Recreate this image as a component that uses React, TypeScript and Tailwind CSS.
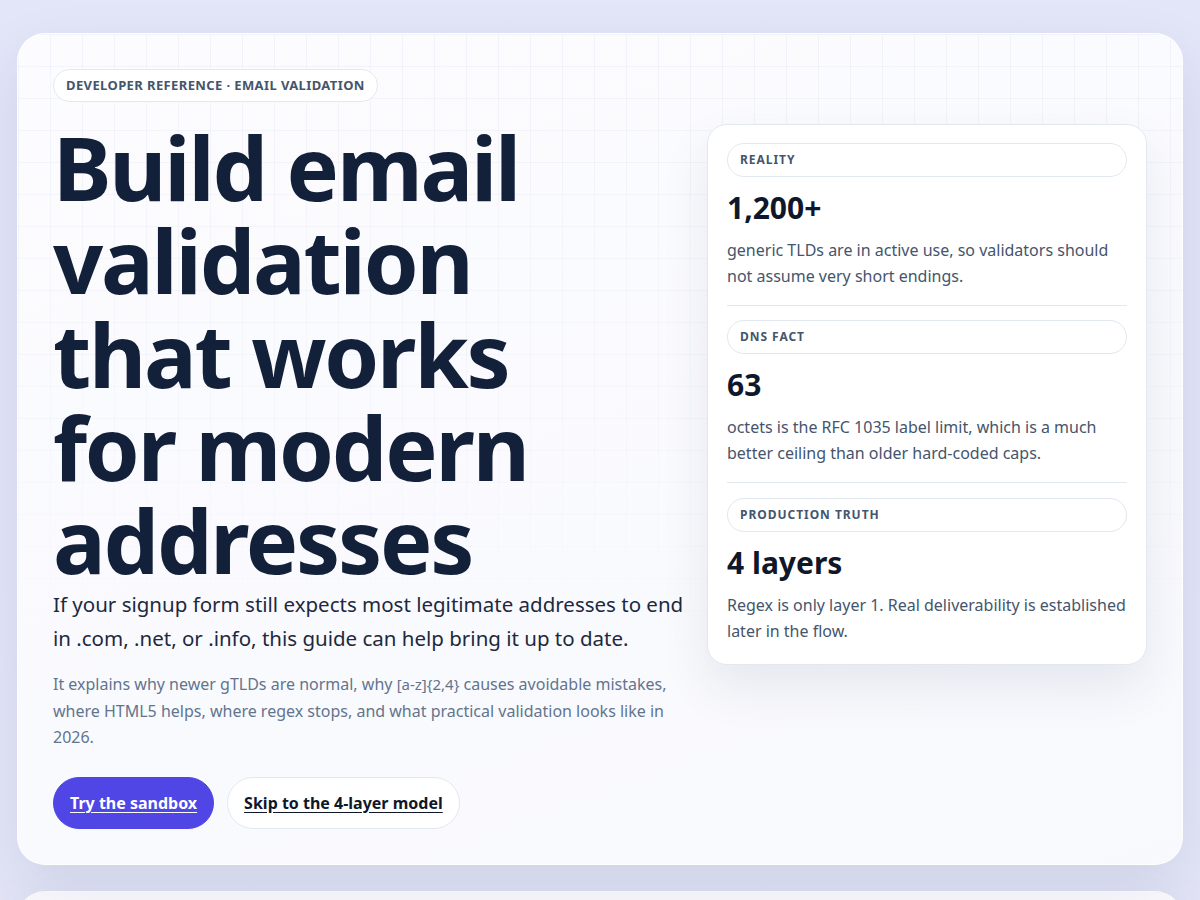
const facts = [
  {
    label: 'Reality',
    value: '1,200+',
    text: 'generic TLDs are in active use, so validators should not assume very short endings.',
  },
  {
    label: 'DNS fact',
    value: '63',
    text: 'octets is the RFC 1035 label limit, which is a much better ceiling than older hard-coded caps.',
  },
  {
    label: 'Production truth',
    value: '4 layers',
    text: 'Regex is only layer 1. Real deliverability is established later in the flow.',
  },
];

function FactCard() {
  return (
    <aside className="mt-[3px] self-start rounded-[20px] border border-slate-200 bg-white px-[19px] pt-[18px] pb-[20px] shadow-[0_22px_50px_rgba(30,41,90,0.09)]">
      {facts.map((f, i) => (
        <div
          key={f.label}
          className={
            i < facts.length - 1
              ? 'border-b border-slate-200 pb-[15px]' + (i > 0 ? ' pt-[14px]' : '')
              : 'pt-[15px]'
          }
        >
          <div className="rounded-full border border-slate-200 px-3 py-2 text-[12px] leading-4 font-bold uppercase tracking-[0.08em] text-slate-600">
            {f.label}
          </div>
          <div className="mt-[13px] text-[30px] leading-[36px] font-bold text-slate-900">{f.value}</div>
          <p className="mt-[11px] text-[16px] leading-[1.65] text-slate-600">{f.text}</p>
        </div>
      ))}
    </aside>
  );
}

export default function App() {
  return (
    <div
      className="min-h-screen bg-[linear-gradient(180deg,#e3e5f8_0%,#e4e6f6_100%)] px-[17px] pt-[33px] pb-10"
      style={{ fontFamily: '"Noto Sans", "Open Sans", sans-serif' }}
    >
      <section className="relative overflow-hidden rounded-[28px] border border-white/80 bg-[linear-gradient(160deg,#fcfcff_0%,#f8f9fd_100%)] px-[35px] py-[35px] shadow-[0_24px_60px_rgba(40,50,110,0.10)]">
        {/* faint grid, fading out toward the bottom */}
        <div className="pointer-events-none absolute inset-0 bg-[linear-gradient(to_right,rgba(99,102,180,0.06)_1px,transparent_1px),linear-gradient(to_bottom,rgba(99,102,180,0.06)_1px,transparent_1px)] bg-[size:32px_32px] [mask-image:linear-gradient(to_bottom,black_0%,rgba(0,0,0,0.6)_45%,transparent_80%)]" />

        <div className="relative">
          <span className="inline-flex rounded-full border border-slate-200 bg-white px-3 py-[7px] text-[13px] leading-[17px] font-bold uppercase tracking-[0.03em] text-slate-600">
            Developer reference · Email validation
          </span>

          <div className="mt-[19px] grid grid-cols-[minmax(0,1fr)_440px] gap-5">
            <div>
              <h1 className="max-w-[560px] text-[88px] leading-[1.06] font-bold tracking-[-0.025em] text-[#13203a]">
                Build email validation that works for modern addresses
              </h1>
              <p className="text-[20.5px] leading-[1.66] text-slate-800">
                If your signup form still expects most legitimate addresses to end in .com, .net, or .info, this
                guide can help bring it up to date.
              </p>
              <p className="mt-4 text-[16px] leading-[1.65] text-slate-500">
                It explains why newer gTLDs are normal, why{' '}
                <code className="text-[15px] leading-none" style={{ fontFamily: '"Noto Sans", sans-serif' }}>
                  [a-z]{'{2,4}'}
                </code>{' '}
                causes avoidable mistakes, where HTML5 helps, where regex stops, and what practical validation looks
                like in 2026.
              </p>
              <div className="mt-[26px] flex gap-[13px]">
                <a
                  href="#sandbox"
                  className="inline-flex h-[52px] items-center rounded-full border border-[#4f46e5] bg-[#4f46e5] px-4 text-[16px] font-bold text-white underline underline-offset-[3px]"
                >
                  Try the sandbox
                </a>
                <a
                  href="#layers"
                  className="inline-flex h-[52px] items-center rounded-full border border-slate-200 bg-white px-4 text-[16px] font-bold text-slate-900 underline underline-offset-[3px]"
                >
                  Skip to the 4-layer model
                </a>
              </div>
            </div>
            <FactCard />
          </div>
        </div>
      </section>

      <section className="mt-[26px] h-[400px] rounded-[28px] border border-white/80 bg-[#fbfbfe] shadow-[0_24px_60px_rgba(40,50,110,0.10)]" />
    </div>
  );
}
